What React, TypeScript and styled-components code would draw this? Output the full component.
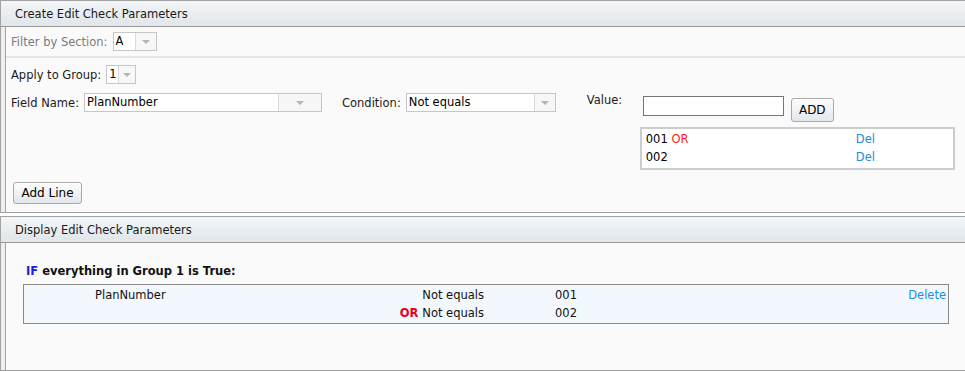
import * as React from "react";
import styled, { createGlobalStyle } from "styled-components";

const GlobalStyle = createGlobalStyle`
  html, body {
    margin: 0;
    padding: 0;
    background: #ffffff;
  }
  body {
    font-family: "DejaVu Sans", Verdana, sans-serif;
    font-size: 11.5px;
    color: #111;
  }
`;

const Page = styled.div`
  width: 965px;
  overflow: hidden;
`;

const Panel = styled.section<{ $gapTop?: number }>`
  margin-top: ${p => p.$gapTop ?? 0}px;
  border: 1px solid #a2a2a2;
  border-right: none;
  background: #efefef;
`;

const PanelHeader = styled.div`
  height: 25px;
  display: flex;
  align-items: center;
  padding-left: 14px;
  background: linear-gradient(#f4f7f9, #dfe5e9);
  border-bottom: 1px solid #989898;
  color: #1a1a1a;
`;

const PanelBody = styled.div<{ $height: number }>`
  height: ${p => p.$height}px;
  margin-left: 4px;
  border-left: 1px solid #a2a2a2;
  background: #fafafa;
  box-sizing: border-box;
`;

const FilterRow = styled.div`
  height: 29px;
  display: flex;
  align-items: center;
  gap: 5px;
  padding: 0 5px;
  border-bottom: 2px solid #e0e6eb;
`;

const GroupRow = styled.div`
  display: flex;
  align-items: center;
  gap: 5px;
  padding: 7px 5px 0;
`;

const FieldRow = styled.div`
  display: flex;
  align-items: flex-start;
  padding: 9px 5px 0;
`;

const Labelled = styled.div<{ $gapLeft?: number }>`
  display: flex;
  align-items: center;
  gap: 5px;
  margin-left: ${p => p.$gapLeft ?? 0}px;
`;

const Label = styled.span<{ $muted?: boolean }>`
  color: ${p => (p.$muted ? "#7c7c7c" : "#1a1a1a")};
  white-space: nowrap;
`;

const Combo = styled.div<{ $w: number }>`
  width: ${p => p.$w}px;
  height: 19px;
  box-sizing: border-box;
  display: flex;
  border: 1px solid #c6c6c6;
  background: #fff;
`;

const ComboText = styled.span`
  flex: 1;
  padding-left: 2px;
  line-height: 17px;
  color: #000;
  white-space: nowrap;
  overflow: hidden;
`;

const ComboArrow = styled.span<{ $w: number }>`
  width: ${p => p.$w}px;
  border-left: 1px solid #dadada;
  background: #f7f7f7;
  display: flex;
  align-items: center;
  justify-content: center;

  &::after {
    content: "";
    border-left: 4px solid transparent;
    border-right: 4px solid transparent;
    border-top: 4px solid #b4b4b4;
  }
`;

const ValueBlock = styled.div`
  margin-left: 31px;
  display: flex;
  flex-direction: column;
`;

const ValueTop = styled.div`
  display: flex;
  align-items: flex-start;
`;

const ValueLabel = styled.span`
  width: 56px;
  line-height: 14px;
  color: #1a1a1a;
`;

const TextInput = styled.input`
  width: 141px;
  height: 20px;
  margin: 3px 0 0;
  box-sizing: border-box;
  border: 1px solid #767676;
  background: #fff;
  font: inherit;
  padding: 0 3px;
`;

const Button = styled.button<{ $w: number; $h: number }>`
  width: ${p => p.$w}px;
  height: ${p => p.$h}px;
  padding: 0;
  border: 1px solid #a9a9a9;
  border-radius: 3px;
  background: linear-gradient(#fdfdfd, #e3e7eb);
  box-shadow: inset 0 1px 0 #fff;
  font: inherit;
  font-size: 12px;
  color: #000;
`;

const AddButton = styled(Button)`
  margin: 5px 0 0 7px;
`;

const ValueList = styled.div`
  width: 315px;
  height: 43px;
  box-sizing: border-box;
  margin: 5px 0 0 53px;
  border: 2px solid #cdcdcd;
  background: #fff;
  padding: 1px 4px 0;
`;

const ValueItem = styled.div`
  display: grid;
  grid-template-columns: 210px auto;
  height: 18px;
  align-items: center;
  color: #000;
`;

const OrText = styled.span<{ $bold?: boolean }>`
  color: ${p => (p.$bold ? "#e6001c" : "#ff1a1a")};
  font-weight: ${p => (p.$bold ? 700 : 400)};
`;

const LinkText = styled.span`
  color: #218ede;
  cursor: pointer;
`;

const AddLineButton = styled(Button)`
  margin: 12px 0 0 7px;
`;

const GroupTitle = styled.div`
  padding: 21px 0 0 20px;
  font-weight: 700;
  color: #111;
  line-height: 14px;
`;

const IfWord = styled.span`
  color: #2020d8;
`;

const RuleBox = styled.div`
  width: 926px;
  box-sizing: border-box;
  margin: 6px 0 0 17px;
  border: 1px solid #8a8a8a;
  background: #f3f8fe;
  padding: 1px 2px 1px 0;
`;

const RuleRow = styled.div`
  display: grid;
  grid-template-columns: 276px 184px 1fr auto;
  height: 18px;
  align-items: center;
  color: #111;
`;

const FieldCell = styled.span`
  padding-left: 71px;
`;

const CondCell = styled.span`
  text-align: right;
`;

const ValueCell = styled.span`
  padding-left: 71px;
`;

const conditions = [
  { field: "PlanNumber", or: false, condition: "Not equals", value: "001" },
  { field: "", or: true, condition: "Not equals", value: "002" },
];

export default function App() {
  return (
    <Page>
      <GlobalStyle />
      <Panel>
        <PanelHeader>Create Edit Check Parameters</PanelHeader>
        <PanelBody $height={185}>
          <FilterRow>
            <Label $muted>Filter by Section:</Label>
            <Combo $w={44}>
              <ComboText>A</ComboText>
              <ComboArrow $w={20} />
            </Combo>
          </FilterRow>
          <GroupRow>
            <Label>Apply to Group:</Label>
            <Combo $w={30}>
              <ComboText>1</ComboText>
              <ComboArrow $w={16} />
            </Combo>
          </GroupRow>
          <FieldRow>
            <Labelled>
              <Label>Field Name:</Label>
              <Combo $w={238}>
                <ComboText>PlanNumber</ComboText>
                <ComboArrow $w={42} />
              </Combo>
            </Labelled>
            <Labelled $gapLeft={20}>
              <Label>Condition:</Label>
              <Combo $w={150}>
                <ComboText>Not equals</ComboText>
                <ComboArrow $w={20} />
              </Combo>
            </Labelled>
            <ValueBlock>
              <ValueTop>
                <ValueLabel>Value:</ValueLabel>
                <TextInput defaultValue="" />
                <AddButton $w={43} $h={24}>ADD</AddButton>
              </ValueTop>
              <ValueList>
                <ValueItem>
                  <span>
                    001 <OrText>OR</OrText>
                  </span>
                  <LinkText>Del</LinkText>
                </ValueItem>
                <ValueItem>
                  <span>002</span>
                  <LinkText>Del</LinkText>
                </ValueItem>
              </ValueList>
            </ValueBlock>
          </FieldRow>
          <AddLineButton $w={69} $h={22}>Add Line</AddLineButton>
        </PanelBody>
      </Panel>

      <Panel $gapTop={3}>
        <PanelHeader>Display Edit Check Parameters</PanelHeader>
        <PanelBody $height={127}>
          <GroupTitle>
            <IfWord>IF</IfWord> everything in Group 1 is True:
          </GroupTitle>
          <RuleBox>
            {conditions.map((c, i) => (
              <RuleRow key={i}>
                <FieldCell>{c.field}</FieldCell>
                <CondCell>
                  {c.or && <OrText $bold>OR </OrText>}
                  {c.condition}
                </CondCell>
                <ValueCell>{c.value}</ValueCell>
                <span>{i === 0 && <LinkText>Delete</LinkText>}</span>
              </RuleRow>
            ))}
          </RuleBox>
        </PanelBody>
      </Panel>
    </Page>
  );
}
